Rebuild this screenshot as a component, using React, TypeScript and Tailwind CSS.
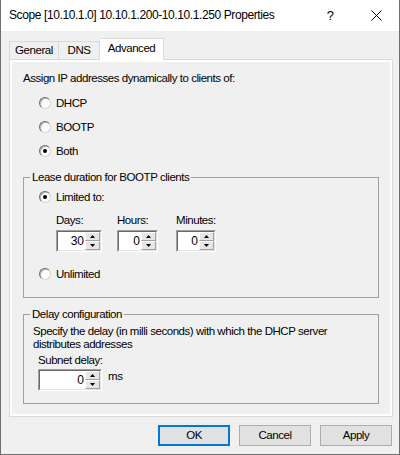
import React from "react";

const font = { fontFamily: '"Liberation Sans", Arial, sans-serif' };

function Radio({ checked, label }: { checked?: boolean; label: string }) {
  return (
    <div className="flex h-[24px] items-center">
      <div className="ml-[1px] flex h-[12px] w-[12px] items-center justify-center rounded-full border border-t-[#6e6e6e] border-l-[#6e6e6e] border-r-[#d4d4d4] border-b-[#d4d4d4] bg-white shadow-[inset_1px_1px_0_#b4b4b4]">
        {checked && <div className="h-[4px] w-[4px] rounded-full bg-black" />}
      </div>
      <span className="ml-[5px]">{label}</span>
    </div>
  );
}

function Tri({ up }: { up?: boolean }) {
  return (
    <svg width="5" height="3" viewBox="0 0 5 3">
      <polygon points={up ? "2.5,0 5,3 0,3" : "0,0 5,0 2.5,3"} fill="#000" />
    </svg>
  );
}

function SpinBox({ w, value }: { w: string; value: string }) {
  return (
    <div className={`${w} flex h-[22px] border border-t-[#a0a0a0] border-l-[#a0a0a0] border-r-white border-b-white`}>
      <div className="flex flex-1 border border-t-[#696969] border-l-[#696969] border-r-[#e3e3e3] border-b-[#e3e3e3] bg-white">
        <div className="flex flex-1 items-center justify-end pr-[1px] text-[12px] leading-none tracking-normal text-[#000]">
          {value}
        </div>
        <div className="flex w-[15px] flex-col">
          <div className="flex h-[9px] items-center justify-center border border-t-white border-l-white border-r-[#a0a0a0] border-b-[#a0a0a0] bg-[#e6e6e6]">
            <Tri up />
          </div>
          <div className="flex h-[9px] items-center justify-center border border-t-white border-l-white border-r-[#a0a0a0] border-b-[#a0a0a0] bg-[#e6e6e6]">
            <Tri />
          </div>
        </div>
      </div>
    </div>
  );
}

function Btn({ label, def }: { label: string; def?: boolean }) {
  return (
    <div
      className={`flex h-[21px] w-[72px] items-center justify-center bg-[#e1e1e1] ${
        def ? "border-2 border-[#0078d7]" : "border border-[#adadad]"
      }`}
    >
      {label}
    </div>
  );
}

export default function App() {
  return (
    <div
      style={font}
      className="flex h-[455px] w-[400px] flex-col border-x border-b border-[#6f6f6f] bg-[#f0f0f0] text-[11.5px] leading-[15px] tracking-[-0.45px] text-black"
    >
      {/* Title bar */}
      <div className="flex h-[31px] shrink-0 items-center bg-white">
        <span className="ml-[8px] flex-1 text-[12px] tracking-[-0.4px]">
          Scope [10.10.1.0] 10.10.1.200-10.10.1.250 Properties
        </span>
        <span className="mr-[37px] text-[13px] tracking-normal">?</span>
        <svg className="mr-[17px]" width="11" height="11" viewBox="0 0 11 11">
          <path d="M0.5 0.5 L10.5 10.5 M10.5 0.5 L0.5 10.5" stroke="#000" strokeWidth="1" />
        </svg>
      </div>

      {/* Tabs */}
      <div className="relative z-10 ml-[8px] mt-[7px] -mb-px flex h-[22px] items-end">
        <div className="flex h-[19px] w-[50px] items-center justify-center border border-b-0 border-[#d9d9d9] pb-[1px]">
          General
        </div>
        <div className="flex h-[19px] w-[41px] items-center justify-center border border-b-0 border-l-0 border-[#d9d9d9] pb-[1px]">
          DNS
        </div>
        <div className="flex h-[22px] w-[64px] items-center justify-center border border-b-0 border-l-0 border-[#d9d9d9] bg-white pb-[3px]">
          Advanced
        </div>
      </div>

      {/* Panel */}
      <div className="ml-[8px] h-[358px] w-[384px] border border-[#d9d9d9] bg-white p-[2px]">
        <div className="flex h-full flex-col bg-[#f0f0f0] px-[11px] pt-[9px]">
          <div>Assign IP addresses dynamically to clients of:</div>
          <div className="mt-[5px] pl-[15px]">
            <Radio label="DHCP" />
            <Radio label="BOOTP" />
            <Radio checked label="Both" />
          </div>

          <fieldset className="mt-[7px] border border-[#a0a0a0] pb-[11px] pl-[14px]">
            <legend className="-ml-[8px] px-[2px]">Lease duration for BOOTP clients</legend>
            <Radio checked label="Limited to:" />
            <div className="mt-[4px] flex pl-[18px]">
              <div className="flex flex-col">
                <span>Days:</span>
                <div className="mt-[2px]">
                  <SpinBox w="w-[46px]" value="30" />
                </div>
              </div>
              <div className="ml-[15px] flex flex-col">
                <span>Hours:</span>
                <div className="mt-[2px]">
                  <SpinBox w="w-[41px]" value="0" />
                </div>
              </div>
              <div className="ml-[18px] flex flex-col">
                <span>Minutes:</span>
                <div className="mt-[2px]">
                  <SpinBox w="w-[40px]" value="0" />
                </div>
              </div>
            </div>
            <div className="mt-[10px]">
              <Radio label="Unlimited" />
            </div>
          </fieldset>

          <fieldset className="mt-[9px] border border-[#a0a0a0] pb-[12px] pl-[9px]">
            <legend className="-ml-[3px] px-[2px]">Delay configuration</legend>
            <div className="mt-[3px] leading-[13px]">
              Specify the delay (in milli seconds) with which the DHCP server
              <br />
              distributes addresses
            </div>
            <div className="mt-[2px] pl-[5px]">Subnet delay:</div>
            <div className="mt-[1px] flex items-start pl-[5px]">
              <SpinBox w="w-[64px]" value="0" />
              <span className="ml-[6px]">ms</span>
            </div>
          </fieldset>
        </div>
      </div>

      {/* Buttons */}
      <div className="mt-[8px] flex justify-end gap-[9px] pr-[7px]">
        <Btn label="OK" def />
        <Btn label="Cancel" />
        <Btn label="Apply" />
      </div>
    </div>
  );
}
